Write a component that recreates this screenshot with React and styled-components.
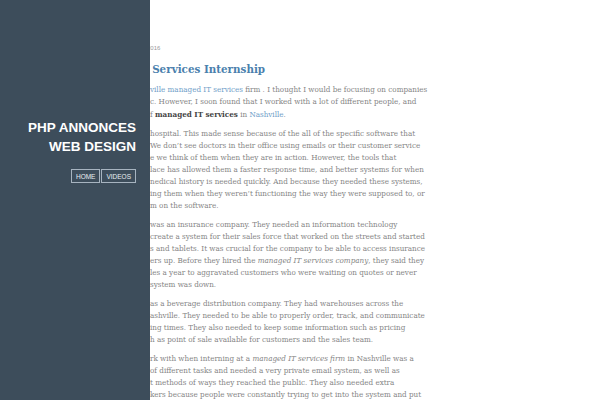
import React from 'react';
import styled, { createGlobalStyle } from 'styled-components';

const GlobalStyle = createGlobalStyle`
    html, body {
        margin: 0;
        padding: 0;
        background: #ffffff;
    }
    body {
        width: 600px;
        height: 400px;
        overflow: hidden;
    }
`

const paragraphs = [
    [
        [{ t: 'ville managed IT services', link: true }, { t: ' firm . I thought I would be focusing on companies' }],
        [{ t: 'c. However, I soon found that I worked with a lot of different people, and' }],
        [{ t: 'f ' }, { t: 'managed IT services', strong: true }, { t: ' in ' }, { t: 'Nashville', link: true }, { t: '.' }],
    ],
    [
        [{ t: ' hospital. This made sense because of the all of the specific software that' }],
        [{ t: 'We don\u2019t see doctors in their office using emails or their customer service' }],
        [{ t: 'e we think of them when they are in action. However, the tools that' }],
        [{ t: 'lace has allowed them a faster response time, and better systems for when' }],
        [{ t: 'nedical history is needed quickly. And because they needed these systems,' }],
        [{ t: 'ing them when they weren\u2019t functioning the way they were supposed to, or' }],
        [{ t: 'm on the software.' }],
    ],
    [
        [{ t: 'was an insurance company. They needed an information technology' }],
        [{ t: 'create a system for their sales force that worked on the streets and started' }],
        [{ t: 's and tablets. It was crucial for the company to be able to access insurance' }],
        [{ t: 'ers up. Before they hired the ' }, { t: 'managed IT services company', em: true }, { t: ', they said they' }],
        [{ t: 'les a year to aggravated customers who were waiting on quotes or never' }],
        [{ t: ' system was down.' }],
    ],
    [
        [{ t: 'as a beverage distribution company. They had warehouses across the' }],
        [{ t: 'ashville. They needed to be able to properly order, track, and communicate' }],
        [{ t: 'ing times. They also needed to keep some information such as pricing' }],
        [{ t: 'h as point of sale available for customers and the sales team.' }],
    ],
    [
        [{ t: 'rk with when interning at a ' }, { t: 'managed IT services firm', em: true }, { t: ' in Nashville was a' }],
        [{ t: 'of different tasks and needed a very private email system, as well as' }],
        [{ t: 't methods of ways they reached the public. They also needed extra' }],
        [{ t: 'kers because people were constantly trying to get into the system and put' }],
    ],
]

function Piece({ part }) {
    if (part.link) return <Link>{part.t}</Link>
    if (part.strong) return <Strong>{part.t}</Strong>
    if (part.em) return <Em>{part.t}</Em>
    return <>{part.t}</>
}

function App() {
    return (
        <Page>
            <GlobalStyle />
            <Sidebar>
                <SiteTitle>PHP ANNONCES<br />WEB DESIGN</SiteTitle>
                <Nav>
                    <NavItem>HOME</NavItem>
                    <NavItem>VIDEOS</NavItem>
                </Nav>
            </Sidebar>
            <Content>
                <PostDate>2016</PostDate>
                <PostTitle>IT Services Internship</PostTitle>
                {paragraphs.map((para, i) => (
                    <Paragraph key={i}>
                        {para.map((line, j) => (
                            <Line key={j}>
                                {line.map((part, k) => <Piece key={k} part={part} />)}
                            </Line>
                        ))}
                    </Paragraph>
                ))}
            </Content>
        </Page>
    );
}

const Page = styled.div`
    position: relative;
    width: 600px;
    height: 400px;
    overflow: hidden;
`

/** sidebar lies over the start of the post */
const Sidebar = styled.aside`
    position: absolute;
    left: 0;
    top: 0;
    bottom: 0;
    width: 150px;
    background-color: #3d4d5b;
    z-index: 2;
    display: flex;
    flex-direction: column;
    align-items: flex-end;
    padding: 118px 14px 0 0;
    box-sizing: border-box;
`

const SiteTitle = styled.h1`
    margin: 0;
    font-family: "Liberation Sans", Arial, sans-serif;
    font-weight: bold;
    font-size: 13.5px;
    line-height: 19px;
    color: #ffffff;
    text-align: right;
`

const Nav = styled.nav`
    display: flex;
    gap: 1px;
    margin-top: 13px;
`

const NavItem = styled.a`
    display: flex;
    align-items: center;
    justify-content: center;
    height: 12px;
    padding: 0 4px;
    border: 1px solid #a7b4c0;
    font-family: "Liberation Sans", Arial, sans-serif;
    font-size: 6.5px;
    color: #e8edf1;
`

const Content = styled.main`
    padding: 43px 0 0 136px;
    font-family: "DejaVu Serif", serif;
    font-stretch: condensed;
    color: #858585;
`

const PostDate = styled.div`
    padding-left: 11px;
    font-family: "Liberation Sans", Arial, sans-serif;
    font-size: 6px;
    line-height: 10px;
    color: #9a9a9a;
`

const PostTitle = styled.h2`
    margin: 8px 0 7px;
    font-size: 11.5px;
    line-height: 16px;
    font-weight: bold;
    color: #4a7fad;
`

const Paragraph = styled.p`
    margin: 0 0 7px;
    padding-left: 14px;
    font-size: 8px;
    line-height: 12px;
`

const Line = styled.span`
    display: block;
    white-space: nowrap;
`

const Link = styled.a`
    color: #6f9ec8;
`

const Strong = styled.strong`
    color: #444444;
    font-weight: bold;
`

const Em = styled.em`
    font-style: italic;
`

export default App;
